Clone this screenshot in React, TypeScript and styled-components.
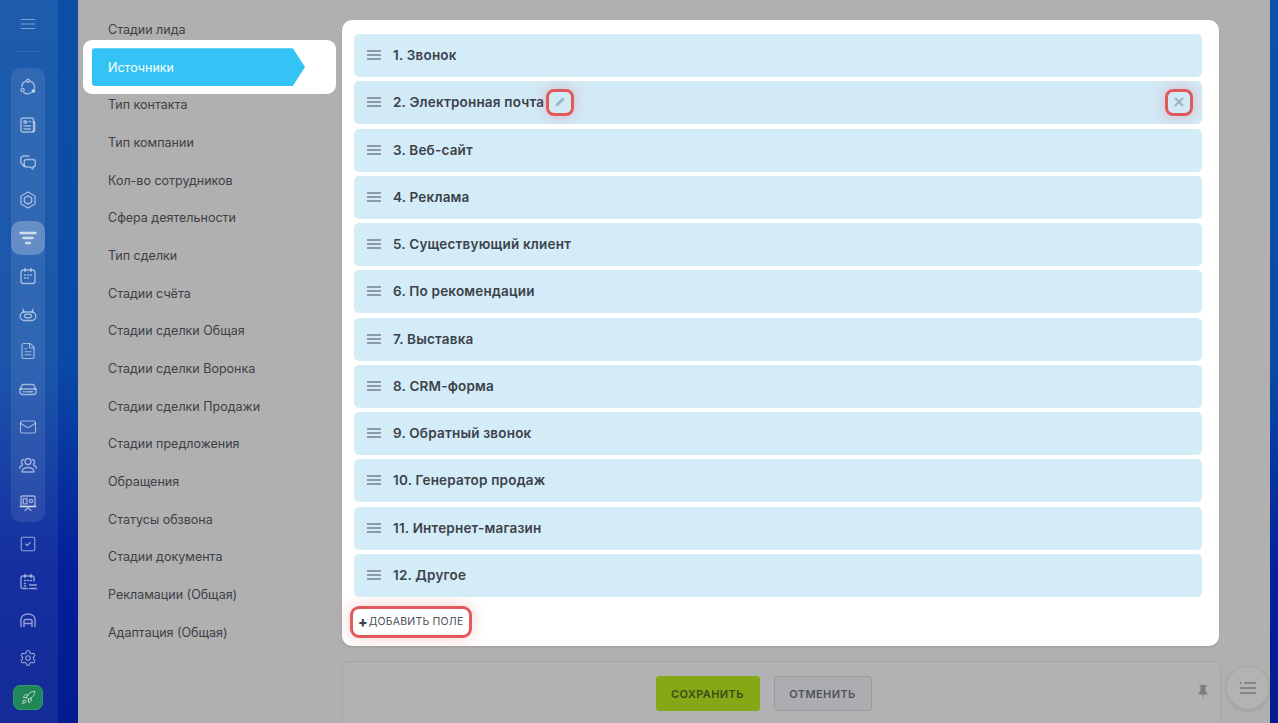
import React from 'react';
import styled, { createGlobalStyle } from 'styled-components';
import { FiMenu } from 'react-icons/fi';
import { FileText, Mail, SquareCheck, Settings, Rocket } from 'lucide-react';

const GlobalStyle = createGlobalStyle`
  html, body {
    margin: 0;
    height: 100%;
    overflow: hidden;
    background: #b0b0b0;
    font-family: Inter, "Liberation Sans", sans-serif;
  }
`;

/* ------------ layout ------------- */
const Page = styled.div`
  display: flex;
  width: 1278px;
  height: 723px;
  overflow: hidden;
  background: #b0b0b0;
`;

const Rail = styled.nav`
  width: 78px;
  flex: none;
  height: 723px;
  background: linear-gradient(180deg, #0c50a6 0%, #0a4aa5 50%, #04209a 78%, #031d90 100%);
`;

const RailInner = styled.div`
  width: 58px;
  height: 100%;
  box-sizing: border-box;
  padding-right: 2px;
  display: flex;
  flex-direction: column;
  align-items: center;
  background: rgba(255, 255, 255, 0.07);
`;

const Burger = styled.div`
  height: 48px;
  display: grid;
  place-items: center;
  color: rgba(255, 255, 255, 0.45);
`;

const RailDivider = styled.div`
  width: 24px;
  height: 1px;
  margin: 3px 0 16px;
  background: rgba(255, 255, 255, 0.1);
`;

const RailGroup = styled.div`
  width: 34px;
  height: 454px;
  flex: none;
  display: grid;
  grid-auto-rows: 37.8px;
  border-radius: 10px;
  background: rgba(255, 255, 255, 0.09);
`;

const RailItem = styled.div<{ $active?: boolean }>`
  display: grid;
  place-items: center;
  height: 34px;
  align-self: center;
  width: 34px;
  border-radius: 10px;
  color: rgba(255, 255, 255, ${p => (p.$active ? 0.68 : 0.55)});
  background: ${p => (p.$active ? 'rgba(255, 255, 255, 0.26)' : 'none')};
`;

const RailRest = styled.div`
  margin-top: 3px;
  display: grid;
  grid-auto-rows: 38px;
`;

const RocketBtn = styled.div`
  width: 30px;
  height: 25px;
  margin-top: 8px;
  display: grid;
  place-items: center;
  border-radius: 7px;
  background: #1f8758;
  border: 1px solid #2f9a68;
  box-sizing: border-box;
  color: rgba(255, 255, 255, 0.7);
`;

const Main = styled.main`
  flex: 1;
  min-width: 0;
  position: relative;
  display: flex;
  background: #b0b0b0;
`;

const Strip = styled.div`
  width: 8px;
  flex: none;
  background: linear-gradient(180deg, #0c52a8 0%, #0a4aa5 50%, #04209a 80%, #031d90 100%);
`;

/* ------------ menu ------------- */
const Menu = styled.ul`
  width: 264px;
  flex: none;
  box-sizing: border-box;
  margin: 0;
  padding: 10.5px 0 0 14px;
  list-style: none;
`;

const MenuItem = styled.li<{ $active?: boolean }>`
  position: relative;
  height: 37.7px;
  display: flex;
  align-items: center;
  padding-left: 16px;
  font-size: 12.5px;
  color: ${p => (p.$active ? '#fff' : '#3d4046')};

  ${p =>
    p.$active &&
    `
    &::before {
      content: '';
      position: absolute;
      left: -9px;
      right: 6px;
      top: -8px;
      bottom: -8px;
      background: #fff;
      border-radius: 9px;
    }
    &::after {
      content: '';
      position: absolute;
      left: 0;
      right: 37px;
      top: 0;
      bottom: 0;
      background: #33c3f5;
      border-radius: 3px 0 0 3px;
      clip-path: polygon(0 0, 94.3% 0, 100% 50%, 94.3% 100%, 0 100%);
    }
  `}
`;

const MenuLabel = styled.span`
  position: relative;
  z-index: 1;
`;

/* ------------ content ------------- */
const Content = styled.section`
  width: 879px;
  flex: none;
  display: flex;
  flex-direction: column;
  padding-top: 20px;
`;

const Panel = styled.div`
  width: 877px;
  height: 626px;
  flex: none;
  box-sizing: border-box;
  padding: 14px 17px 0 12px;
  background: #fff;
  border-radius: 10px;
  box-shadow: 0 1px 2px rgba(0, 0, 0, 0.12);
`;

const Rows = styled.div`
  display: grid;
  grid-auto-rows: 43px;
  row-gap: 4.27px;
`;

const Row = styled.div<{ $hover?: boolean }>`
  display: flex;
  align-items: center;
  padding: 0 9px 1px 13px;
  border-radius: 5px;
  background: ${p => (p.$hover ? '#d2e9f6' : '#d3ecf8')};
`;

const Grip = styled.span`
  width: 14px;
  height: 10px;
  flex: none;
  margin-right: 12px;
  border-top: 2px solid #8c9aa5;
  border-bottom: 2px solid #8c9aa5;
  box-sizing: border-box;
  position: relative;

  &::after {
    content: '';
    position: absolute;
    left: 0;
    right: 0;
    top: 2px;
    height: 2px;
    background: #8c9aa5;
  }
`;

const RowTitle = styled.span`
  font-size: 13.5px;
  font-weight: 600;
  letter-spacing: 0.2px;
  color: #3c424a;
`;

const Marked = styled.span`
  width: 28px;
  height: 27px;
  box-sizing: border-box;
  display: grid;
  place-items: center;
  border: 3px solid #e05a5c;
  border-radius: 8px;
  color: #9fb3c0;
  box-shadow: 0 0 14px rgba(224, 90, 92, 0.32);
`;

const EditMark = styled(Marked)`
  margin-left: 2px;
`;

const CloseMark = styled(Marked)`
  margin-left: auto;
`;

const AddBtn = styled.div`
  width: 122px;
  height: 32px;
  margin: 9px 0 0 -4px;
  box-sizing: border-box;
  display: flex;
  align-items: center;
  gap: 1px;
  padding-left: 5px;
  border: 3px solid #e05a5c;
  border-radius: 9px;
  background: #fff;
  box-shadow: 0 0 16px rgba(224, 90, 92, 0.3);
  font-size: 10.5px;
  letter-spacing: 0.2px;
  white-space: nowrap;
  color: #4a4f57;
`;

const Plus = styled.b`
  font-size: 14px;
  line-height: 1;
  font-weight: 800;
  color: #3c424a;
`;

const Footer = styled.div`
  width: 879px;
  height: 90px;
  flex: none;
  margin-top: 15px;
  box-sizing: border-box;
  position: relative;
  display: flex;
  justify-content: center;
  gap: 14px;
  padding: 14px 36px 0 0;
  border: 1px solid #a4a4a4;
  border-radius: 6px;
  background: #b2b2b2;
`;

const Btn = styled.div<{ $primary?: boolean }>`
  height: 35px;
  width: ${p => (p.$primary ? '104px' : '98px')};
  box-sizing: border-box;
  display: grid;
  place-items: center;
  border-radius: 3px;
  border: 1px solid ${p => (p.$primary ? '#85a816' : '#9a9b9e')};
  background: ${p => (p.$primary ? '#85a816' : '#acadb0')};
  color: ${p => (p.$primary ? '#3b4a1a' : '#50535a')};
  font-size: 11px;
  font-weight: 600;
  letter-spacing: 0.4px;
`;

const PinIcon = styled.span`
  position: absolute;
  right: 11px;
  top: 22px;
  color: #7d7d7d;
  line-height: 0;
`;

const RoundBtn = styled.div`
  position: absolute;
  left: 1149px;
  top: 667px;
  width: 42px;
  height: 42px;
  display: grid;
  place-items: center;
  border-radius: 50%;
  background: #b3b3b3;
  box-shadow: 0 1px 5px rgba(0, 0, 0, 0.14);
  color: #777;
`;

/* ------------ icons ------------- */
const Svg: React.FC<{ children: React.ReactNode }> = ({ children }) => (
  <svg
    width={18}
    height={18}
    viewBox="0 0 18 18"
    fill="none"
    stroke="currentColor"
    strokeWidth="1.4"
    strokeLinecap="round"
    strokeLinejoin="round"
  >
    {children}
  </svg>
);

const railIcons: React.ReactNode[] = [
  <Svg key="crm">
    <path d="M6.6 3.2A6.6 6.6 0 0 0 2.7 8.5M5 14.9c2.3 1.1 5.3 1 7.3-.4M15.6 10.5c.4-2.6-.6-5.3-4.1-7.3" />
    <circle cx="9" cy="2.8" r="1.5" />
    <circle cx="3.6" cy="12" r="1.6" />
    <circle cx="14.4" cy="13" r="1.3" fill="currentColor" />
  </Svg>,
  <Svg key="news">
    <rect x="2" y="2" width="12.5" height="14" rx="2" />
    <path d="M14.5 6h1.2v8.3a1.7 1.7 0 0 1-1.7 1.7M5 10h6.5M5 13h6.5M5 5h2.5v2H5zM10 5.5h1.5" />
  </Svg>,
  <Svg key="chat">
    <path d="M10 3H5a3.2 3.2 0 0 0-3.2 3.2v2.6c0 1.3.7 2.4 1.8 2.9l1.4 1.7V12" />
    <path d="M7.7 6.5h6.1a2.5 2.5 0 0 1 2.5 2.5v2.5a2.5 2.5 0 0 1-2.5 2.5v2l-2.5-2H7.7a2.5 2.5 0 0 1-2.5-2.5V9a2.5 2.5 0 0 1 2.5-2.5z" />
  </Svg>,
  <Svg key="hex">
    <path d="M9 1l7 4v8l-7 4-7-4V5z" />
    <path d="M9 4.8l3.6 2.1v4.2L9 13.2l-3.6-2.1V6.9z" />
  </Svg>,
  <Svg key="funnel">
    <path d="M1.5 4h15" strokeWidth="2.4" />
    <path d="M4.5 9h9" strokeWidth="2.4" />
    <path d="M7 14h4" strokeWidth="2.4" />
  </Svg>,
  <Svg key="cal">
    <rect x="2" y="3" width="14" height="13.5" rx="2.5" />
    <path d="M6 1.5v3M12 1.5v3M5.5 8h1M8.5 8h1M11.5 8h1M5.5 11h1M8.5 11h1" />
  </Svg>,
  <Svg key="bot">
    <rect x="1.2" y="7" width="15.6" height="8.5" rx="4" />
    <path d="M5 7L3.8 4.200M13 7l1.2-2.800" />
    <rect x="5.5" y="9.3" width="7" height="3.5" rx="1.75" />
  </Svg>,
  <FileText key="file" size={18} strokeWidth={1.5} />,
  <Svg key="drive">
    <path d="M3.5 4.5h11l2.5 5V12a2.5 2.5 0 0 1-2.5 2.5h-11A2.5 2.5 0 0 1 1 12V9.500z" />
    <path d="M1 9h16M4.5 11.8h1M7.5 11.8h6" />
  </Svg>,
  <Mail key="mail" size={18} strokeWidth={1.5} />,
  <Svg key="users">
    <circle cx="9" cy="5.5" r="3" />
    <path d="M3.5 16h11c.5 0 .7-.6.5-1-.9-2.2-3-3.5-6-3.5s-5.1 1.3-6 3.5c-.2.4 0 1 .5 1z" />
    <path d="M4.5 3.5a2.5 2.5 0 0 0-1 4.5L3 9.500c-1.200.5-2 1.500-2.500 2.700M13.500 3.500a2.500 2.500 0 0 1 1 4.500l.5 1.500c1.200.5 2 1.500 2.500 2.700" />
  </Svg>,
  <Svg key="board">
    <rect x="2" y="2" width="14" height="10.5" rx="1" />
    <path d="M1 12.5h16M9 12.5V14M6 16.5L9 14l3 2.5" />
    <rect x="4.3" y="4.6" width="3.7" height="5.3" />
    <circle cx="12" cy="7" r="1.6" />
  </Svg>,
];

const railRest: React.ReactNode[] = [
  <SquareCheck key="check" size={18} strokeWidth={1.5} />,
  <Svg key="calendar">
    <path d="M8.5 15.5H3.8A1.8 1.8 0 0 1 2 13.7V4.800A1.800 1.800 0 0 1 3.800 3h9.400A1.800 1.800 0 0 1 15 4.800V8" />
    <path d="M6 1.5v3M12 1.5v3M5.5 7.5h1M8.5 7.5h1M11.5 7.5h1M5.5 10.5h1M5.5 13h1M10.5 12h7M10.5 15.5h7" />
  </Svg>,
  <Svg key="garage">
    <path d="M2 15.5V8.5C2 5 5 3 9 3s7 2 7 5.500v7" />
    <path d="M5 15.5V10a1.5 1.5 0 0 1 1.500-1.500h5A1.500 1.500 0 0 1 13 10v5.500M5 12.500h8" />
  </Svg>,
  <Settings key="gear" size={18} strokeWidth={1.5} />,
];

const menuItems = [
  'Стадии лида',
  'Источники',
  'Тип контакта',
  'Тип компании',
  'Кол-во сотрудников',
  'Сфера деятельности',
  'Тип сделки',
  'Стадии счёта',
  'Стадии сделки Общая',
  'Стадии сделки Воронка',
  'Стадии сделки Продажи',
  'Стадии предложения',
  'Обращения',
  'Статусы обзвона',
  'Стадии документа',
  'Рекламации (Общая)',
  'Адаптация (Общая)',
];

const rows = [
  '1. Звонок',
  '2. Электронная почта',
  '3. Веб-сайт',
  '4. Реклама',
  '5. Существующий клиент',
  '6. По рекомендации',
  '7. Выставка',
  '8. CRM-форма',
  '9. Обратный звонок',
  '10. Генератор продаж',
  '11. Интернет-магазин',
  '12. Другое',
];

/* ------------ component ------------- */
const App: React.FC = () => (
  <Page>
    <GlobalStyle />
    <Rail>
      <RailInner>
        <Burger>
          <FiMenu size={18} strokeWidth={1.3} />
        </Burger>
        <RailDivider />
        <RailGroup>
          {railIcons.map((icon, idx) => (
            <RailItem key={idx} $active={idx === 4}>
              {icon}
            </RailItem>
          ))}
        </RailGroup>
        <RailRest>
          {railRest.map((icon, idx) => (
            <RailItem key={idx}>{icon}</RailItem>
          ))}
        </RailRest>
        <RocketBtn>
          <Rocket size={15} strokeWidth={1.5} />
        </RocketBtn>
      </RailInner>
    </Rail>

    <Main>
      <Menu>
        {menuItems.map((item, idx) => (
          <MenuItem key={item} $active={idx === 1}>
            <MenuLabel>{item}</MenuLabel>
          </MenuItem>
        ))}
      </Menu>

      <Content>
        <Panel>
          <Rows>
            {rows.map((row, idx) => (
              <Row key={row} $hover={idx === 1}>
                <Grip />
                <RowTitle>{row}</RowTitle>
                {idx === 1 && (
                  <>
                    <EditMark>
                      <svg width="12" height="12" viewBox="0 0 12 12" fill="currentColor">
                        <path d="M8.6 1.4l2 2-6.4 6.4-2.7.7.7-2.7z" />
                      </svg>
                    </EditMark>
                    <CloseMark>
                      <svg width="10" height="10" viewBox="0 0 10 10" stroke="currentColor" strokeWidth="2">
                        <path d="M1 1l8 8M9 1l-8 8" />
                      </svg>
                    </CloseMark>
                  </>
                )}
              </Row>
            ))}
          </Rows>
          <AddBtn>
            <Plus>+</Plus>
            ДОБАВИТЬ ПОЛЕ
          </AddBtn>
        </Panel>

        <Footer>
          <Btn $primary>СОХРАНИТЬ</Btn>
          <Btn>ОТМЕНИТЬ</Btn>
          <PinIcon>
            <svg width="12" height="16" viewBox="0 0 12 16" fill="currentColor">
              <path d="M2.5 1h7v1.5h-1v4.5l2 2.500v1H6.600L6 15.500 5.400 10.500H1.500v-1l2-2.500V2.500h-1z" />
            </svg>
          </PinIcon>
        </Footer>
      </Content>

      <RoundBtn>
        <svg width="18" height="14" viewBox="0 0 18 14" stroke="currentColor" strokeWidth="1.6">
          <path d="M5 2h12M1 7h16M1 12h16" />
          <circle cx="1.5" cy="2" r="1" fill="currentColor" stroke="none" />
        </svg>
      </RoundBtn>
    </Main>
    <Strip />
  </Page>
);

export default App;
